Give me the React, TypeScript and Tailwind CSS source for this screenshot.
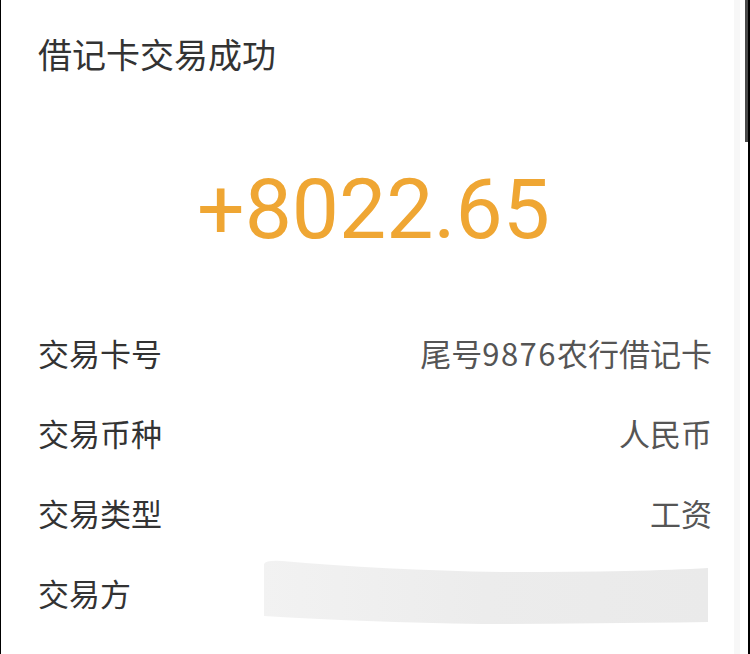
import React from "react";

const rows: { label: string; value: React.ReactNode }[] = [
  {
    label: "交易卡号",
    value: (
      <>
        尾号<span className="tracking-[1.5px]">9876</span>农行借记卡
      </>
    ),
  },
  { label: "交易币种", value: "人民币" },
  { label: "交易类型", value: "工资" },
];

export default function App() {
  return (
    <div
      className="relative w-[750px] h-[654px] bg-white overflow-hidden border-l border-black"
      style={{ fontFamily: '"Noto Sans CJK SC", "Noto Sans", sans-serif' }}
    >
      <div className="absolute right-0 top-0 h-full w-[2px] bg-black" />
      <div className="absolute right-[2px] top-0 h-[142px] w-[3px] bg-[#4a4a4a]" />
      <div className="absolute right-[10px] top-0 h-full w-[6px] bg-[#f7f7f7]" />
      <div className="flex flex-col">
        <div className="h-[108px] flex items-center pl-[37px]">
          <span className="text-[34px] leading-none text-[#333333]">借记卡交易成功</span>
        </div>
        <div className="h-[204px] flex items-center justify-center">
          <span
            className="text-[84px] leading-none text-[#efa633] pr-[4px]"
            style={{ fontFamily: 'Roboto, "Noto Sans", sans-serif' }}
          >
            +8022.65
          </span>
        </div>
        {rows.map((r) => (
          <div key={r.label} className="h-[80px] flex items-center justify-between pl-[37px] pr-[38px]">
            <span className="text-[31px] leading-none text-[#333333]">{r.label}</span>
            <span className="text-[31px] leading-none text-[#555555]">{r.value}</span>
          </div>
        ))}
        <div className="h-[80px] flex items-center justify-between pl-[37px] pr-[40px]">
          <span className="text-[31px] leading-none text-[#333333]">交易方</span>
          <svg width="448" height="72" viewBox="0 0 448 72" className="mt-[4px]">
            <defs>
              <linearGradient id="g" x1="0" x2="1" y1="0" y2="0">
                <stop offset="0" stopColor="#f2f2f2" />
                <stop offset="0.5" stopColor="#ececec" />
                <stop offset="1" stopColor="#eaeaea" />
              </linearGradient>
            </defs>
            <path
              d="M2 6 Q4 2 20 3 Q120 12 240 14 Q380 14 446 10 L446 64 Q300 66 220 66 Q100 64 2 58 Z"
              fill="url(#g)"
            />
          </svg>
        </div>
      </div>
    </div>
  );
}
